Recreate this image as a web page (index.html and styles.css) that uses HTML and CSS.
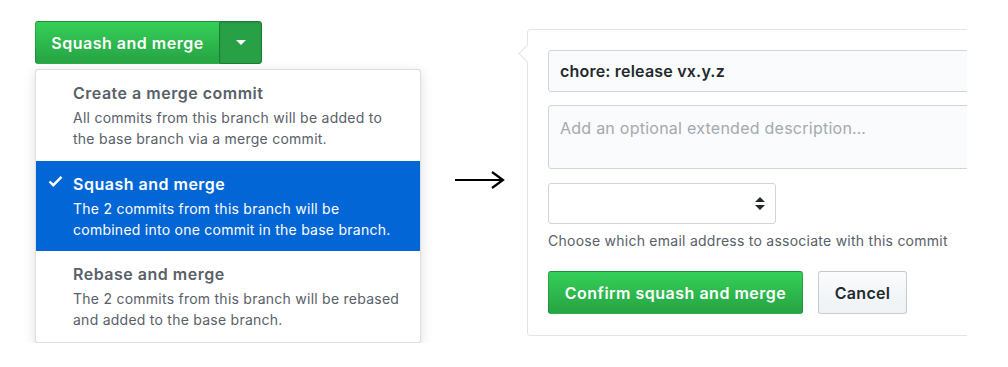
FILE: index.html
```html
<!DOCTYPE html>
<html>
<head>
<meta charset="utf-8">
<link rel="stylesheet" href="styles.css">
</head>
<body>
<div class="page">
  <div class="left">
    <div class="btn-group">
      <button class="btn-green btn-main">Squash and merge</button>
      <button class="btn-green btn-caret"><span class="caret"></span></button>
    </div>
    <div class="menu">
      <div class="item">
        <div class="item-title">Create a merge commit</div>
        <div class="item-desc">All commits from this branch will be added to<br>the base branch via a merge commit.</div>
      </div>
      <div class="item selected">
        <svg class="check" width="15" height="12" viewBox="0 0 15 12"><path d="M1.5 6.5 L5.3 10.2 L13.5 1.8" fill="none" stroke="#fff" stroke-width="2.4" stroke-linejoin="miter"/></svg>
        <div class="item-title">Squash and merge</div>
        <div class="item-desc">The 2 commits from this branch will be<br>combined into one commit in the base branch.</div>
      </div>
      <div class="item">
        <div class="item-title">Rebase and merge</div>
        <div class="item-desc">The 2 commits from this branch will be rebased<br>and added to the base branch.</div>
      </div>
    </div>
  </div>
  <div class="arrow">
    <svg width="50" height="20" viewBox="0 0 50 20"><path d="M0 10 H47" stroke="#000" stroke-width="2"/><path d="M37 2 L48 10 L37 18" fill="none" stroke="#000" stroke-width="2.2"/></svg>
  </div>
  <div class="panel-clip">
    <div class="panel">
      <span class="notch"></span>
      <div class="field title-field">chore: release vx.y.z</div>
      <div class="field desc-field">Add an optional extended description…</div>
      <div class="select">
        <svg class="select-arrows" width="10" height="13" viewBox="0 0 10 13"><path d="M5 0 L10 5 H0 Z M0 8 H10 L5 13 Z" fill="#24292e"/></svg>
      </div>
      <div class="note">Choose which email address to associate with this commit</div>
      <div class="actions">
        <button class="btn-green btn-confirm">Confirm squash and merge</button>
        <button class="btn-cancel">Cancel</button>
      </div>
    </div>
  </div>
</div>
</body>
</html>
```

FILE: styles.css
```css
* { box-sizing: border-box; }
body {
  margin: 0;
  background: #fff;
  font-family: Inter, "Liberation Sans", Arial, sans-serif;
  color: #24292e;
  letter-spacing: 0.25px;
}
.page {
  display: flex;
  align-items: flex-start;
  padding: 21px 0 0 35px;
}
.left {
  width: 386px;
  display: flex;
  flex-direction: column;
}
.btn-group {
  display: flex;
  height: 43px;
}
button {
  font-family: inherit;
  cursor: pointer;
}
.btn-green {
  color: #fff;
  font-weight: 600;
  font-size: 16px;
  letter-spacing: 0.5px;
  background: linear-gradient(#34d058, #28a745 90%);
  border: 1px solid rgba(27,31,35,0.2);
  border-radius: 3px;
}
.btn-main {
  width: 184px;
  padding: 0;
  border-radius: 3px 0 0 3px;
  border-right: 0;
}
.btn-caret {
  width: 43px;
  padding: 0;
  border-radius: 0 3px 3px 0;
  background: #28a046;
  border: 1px solid #1f7c36;
  box-shadow: inset 0 1px 2px rgba(0,0,0,0.1);
  display: flex;
  align-items: center;
  justify-content: center;
}
.caret {
  width: 0;
  height: 0;
  border-left: 5px solid transparent;
  border-right: 5px solid transparent;
  border-top: 5px solid #fff;
}
.menu {
  margin-top: 5px;
  background: #fff;
  border: 1px solid rgba(27,31,35,0.15);
  border-radius: 3px;
  box-shadow: 0 3px 12px rgba(27,31,35,0.15);
  overflow: hidden;
}
.item {
  position: relative;
  padding: 13px 10px 11px 37px;
  height: 91px;
  color: #586069;
}
.item.selected {
  height: 90px;
  background: #0366d6;
  color: #fff;
}
.item-title {
  font-size: 16px;
  font-weight: 600;
  letter-spacing: 0.5px;
  line-height: 20px;
  margin-bottom: 4px;
}
.item-desc {
  font-size: 14px;
  line-height: 21px;
}
.check {
  position: absolute;
  left: 12px;
  top: 14px;
}
.arrow {
  margin: 149px 0 0 34px;
  width: 50px;
  height: 20px;
}
.arrow svg { display: block; }
.panel-clip {
  margin: 8px 0 0 12px;
  width: 450px;
  overflow: hidden;
  padding-left: 10px;
}
.panel {
  position: relative;
  width: 600px;
  height: 307px;
  border: 1px solid #e1e4e8;
  border-radius: 3px;
  background: #fff;
  padding: 20px;
  display: flex;
  flex-direction: column;
  align-items: flex-start;
}
.notch {
  position: absolute;
  left: -7px;
  top: 17px;
  width: 13px;
  height: 13px;
  background: #fff;
  border-left: 1px solid #e1e4e8;
  border-bottom: 1px solid #e1e4e8;
  transform: rotate(45deg);
}
.field {
  width: 100%;
  background: #fafbfc;
  border: 1px solid #d1d5da;
  border-radius: 3px;
  font-size: 16px;
  padding: 0 11px;
}
.title-field {
  height: 42px;
  line-height: 40px;
  font-weight: 600;
  letter-spacing: 0.2px;
  color: #24292e;
}
.desc-field {
  margin-top: 13px;
  height: 64px;
  padding-top: 10px;
  line-height: 24px;
  color: #a3aab1;
}
.select {
  margin-top: 14px;
  width: 228px;
  height: 41px;
  border: 1px solid #d1d5da;
  border-radius: 3px;
  background: #fff;
  display: flex;
  align-items: center;
  justify-content: flex-end;
  padding-right: 10px;
}
.select-arrows { display: block; }
.note {
  margin-top: 8px;
  font-size: 14px;
  line-height: 18px;
  color: #586069;
}
.actions {
  margin-top: 21px;
  display: flex;
  gap: 15px;
}
.btn-confirm {
  width: 255px;
  height: 43px;
  padding: 0;
}
.btn-cancel {
  width: 89px;
  height: 43px;
  padding: 0;
  font-size: 16px;
  font-weight: 600;
  letter-spacing: 0.3px;
  color: #24292e;
  background: linear-gradient(#fafbfc, #eff3f6 90%);
  border: 1px solid rgba(27,31,35,0.2);
  border-radius: 3px;
}
```
